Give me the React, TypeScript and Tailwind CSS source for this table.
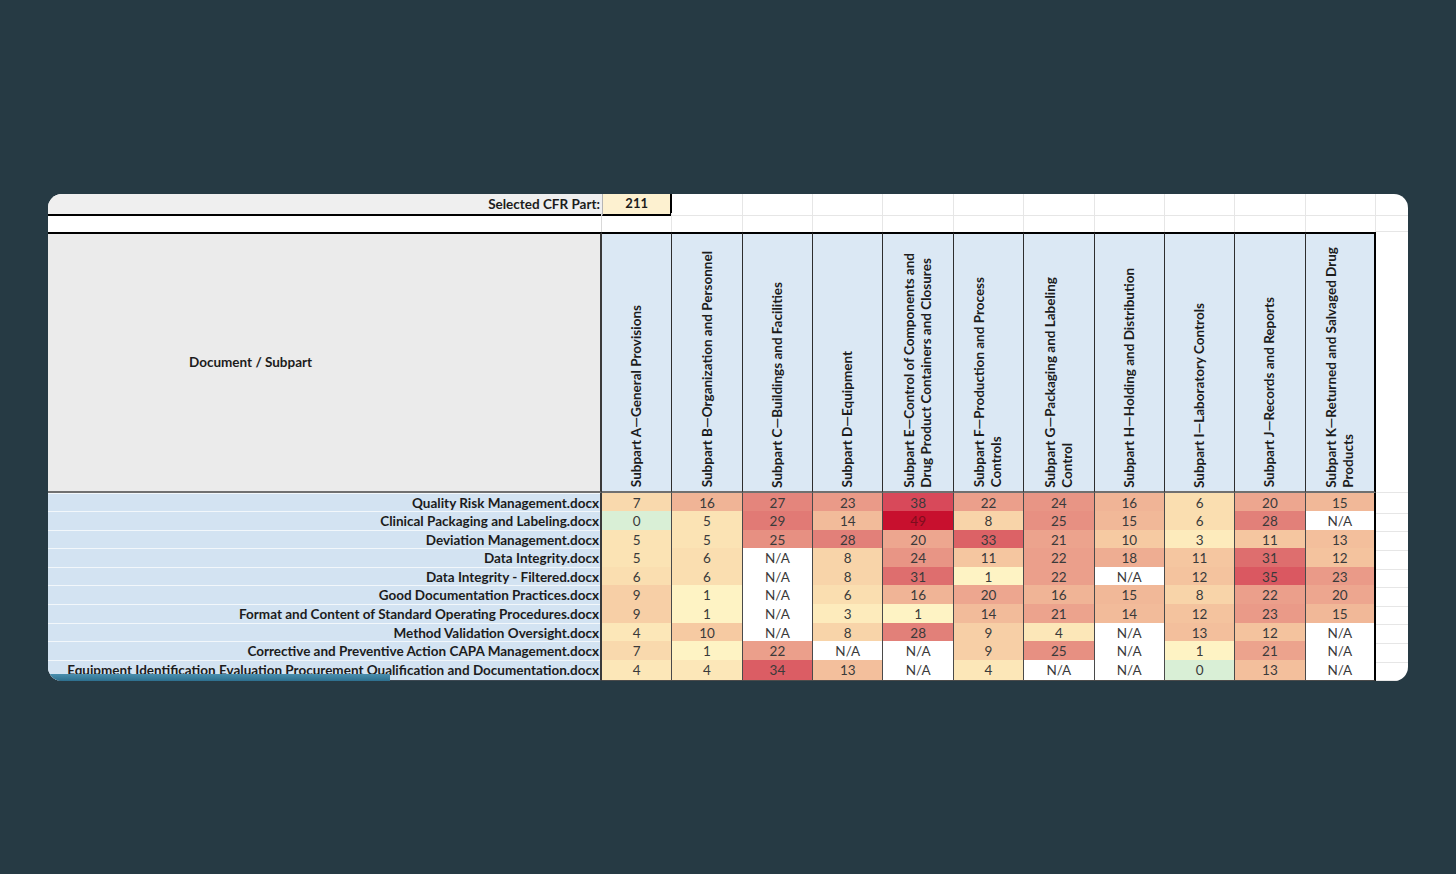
import React from "react";

const cols: string[][] = [
  ["Subpart A—General Provisions"],
  ["Subpart B—Organization and Personnel"],
  ["Subpart C—Buildings and Facilities"],
  ["Subpart D—Equipment"],
  ["Subpart E—Control of Components and", "Drug Product Containers and Closures"],
  ["Subpart F—Production and Process", "Controls"],
  ["Subpart G—Packaging and Labeling", "Control"],
  ["Subpart H—Holding and Distribution"],
  ["Subpart I—Laboratory Controls"],
  ["Subpart J—Records and Reports"],
  ["Subpart K—Returned and Salvaged Drug", "Products"],
];

type V = number | null;
const rows: { name: string; v: V[] }[] = [
  { name: "Quality Risk Management.docx", v: [7, 16, 27, 23, 38, 22, 24, 16, 6, 20, 15] },
  { name: "Clinical Packaging and Labeling.docx", v: [0, 5, 29, 14, 49, 8, 25, 15, 6, 28, null] },
  { name: "Deviation Management.docx", v: [5, 5, 25, 28, 20, 33, 21, 10, 3, 11, 13] },
  { name: "Data Integrity.docx", v: [5, 6, null, 8, 24, 11, 22, 18, 11, 31, 12] },
  { name: "Data Integrity - Filtered.docx", v: [6, 6, null, 8, 31, 1, 22, null, 12, 35, 23] },
  { name: "Good Documentation Practices.docx", v: [9, 1, null, 6, 16, 20, 16, 15, 8, 22, 20] },
  { name: "Format and Content of Standard Operating Procedures.docx", v: [9, 1, null, 3, 1, 14, 21, 14, 12, 23, 15] },
  { name: "Method Validation Oversight.docx", v: [4, 10, null, 8, 28, 9, 4, null, 13, 12, null] },
  { name: "Corrective and Preventive Action CAPA Management.docx", v: [7, 1, 22, null, null, 9, 25, null, 1, 21, null] },
  { name: "Equipment Identification Evaluation Procurement Qualification and Documentation.docx", v: [4, 4, 34, 13, null, 4, null, null, 0, 13, null] },
];

const stops: [number, [number, number, number]][] = [
  [1, [254, 243, 196]],
  [5, [251, 227, 180]],
  [10, [246, 202, 162]],
  [16, [240, 180, 150]],
  [22, [235, 159, 139]],
  [28, [226, 128, 121]],
  [33, [220, 98, 102]],
  [38, [216, 73, 90]],
  [49, [200, 16, 46]],
];

function heat(v: V): string {
  if (v === null) return "#ffffff";
  if (v <= 0) return "#d9efd6";
  for (let i = 0; i < stops.length - 1; i++) {
    const [a, ca] = stops[i];
    const [b, cb] = stops[i + 1];
    if (v >= a && v <= b) {
      const t = (v - a) / (b - a);
      const c = ca.map((x, k) => Math.round(x + (cb[k] - x) * t));
      return `rgb(${c[0]},${c[1]},${c[2]})`;
    }
  }
  return "rgb(200,16,46)";
}

const grid = "grid grid-cols-[554px_repeat(11,minmax(0,1fr))_32px]";

export default function App() {
  return (
    <div className="h-screen w-full bg-[#263a44] flex items-center justify-center font-['Lato','Open_Sans',sans-serif] text-[#1c1c1c]">
      <div className="relative w-[1360px] h-[487px] bg-white rounded-[14px] overflow-hidden">
        {/* Row 1 */}
        <div className={`${grid} h-[19px]`}>
          <div className="bg-[#efefef] border-b-2 border-black flex items-center justify-end pr-[2px] text-[13.5px] font-bold">
            Selected CFR Part:
          </div>
          <div className="bg-[#fdf1d0] border-b-2 border-r-2 border-black border-l border-l-[#b5b5b5] flex items-center justify-center text-[13px] font-bold">
            211
          </div>
          {Array.from({ length: 10 }).map((_, i) => (
            <div key={i} className="border-r border-b border-[#e6e6e6]" />
          ))}
          <div className="border-b border-[#e6e6e6]" />
        </div>
        {/* Row 2 */}
        <div className={`${grid} h-[19px]`}>
          <div className="border-r border-[#d9d9d9]" />
          {Array.from({ length: 11 }).map((_, i) => (
            <div key={i} className="border-r border-[#e6e6e6]" />
          ))}
          <div className="border-b border-[#e6e6e6]" />
        </div>
        {/* Header */}
        <div className={`${grid} h-[261px]`}>
          <div className="bg-[#ebebeb] border-t-2 border-t-black border-b-2 border-b-[#707070] border-r-2 border-r-[#3a3a3a] flex items-center pl-[141px] text-[13.5px] font-bold">
            Document / Subpart
          </div>
          {cols.map((lines, i) => (
            <div
              key={i}
              className={`bg-[#dbe8f4] border-t-2 border-t-black border-b-2 border-b-[#707070] flex items-end justify-center pb-[3px] ${
                i === cols.length - 1 ? "border-r-2 border-r-black" : "border-r border-r-[#2e2e2e]"
              }`}
            >
              <div className="[writing-mode:vertical-rl] rotate-180 text-[13.5px] font-bold leading-[17px] whitespace-nowrap text-left">
                {lines.map((l, k) => (
                  <div key={k}>{l}</div>
                ))}
              </div>
            </div>
          ))}
          <div className="border-b border-[#e6e6e6]" />
        </div>
        {/* Data */}
        {rows.map((r, ri) => (
          <div key={ri} className={`${grid} h-[18.6px]`}>
            <div className="bg-[#d3e3f2] border-b border-b-[#3d4852] border-r-2 border-r-[#3a3a3a] shadow-[inset_0_1px_0_rgba(255,255,255,0.7)] flex items-center justify-end pr-[1px] text-[13.5px] font-bold whitespace-nowrap overflow-hidden">
              {r.name}
            </div>
            {r.v.map((v, ci) => (
              <div
                key={ci}
                className={`border-b border-b-[#4a4a4a] flex items-center justify-center text-[13.5px] ${
                  ci === r.v.length - 1 ? "border-r-2 border-r-black" : "border-r border-r-[#4a4a4a]"
                }`}
                style={{ backgroundColor: heat(v), color: v !== null && v >= 45 ? "#7d0d1d" : "#3a3a3a" }}
              >
                {v === null ? "N/A" : v}
              </div>
            ))}
            <div className="border-b border-[#e6e6e6]" />
          </div>
        ))}
        {/* progress bar overlay */}
        <div className="absolute left-0 bottom-0 w-[342px] h-[7px] bg-gradient-to-b from-[#4a8fae] to-[#2d6f8e]" />
      </div>
    </div>
  );
}
